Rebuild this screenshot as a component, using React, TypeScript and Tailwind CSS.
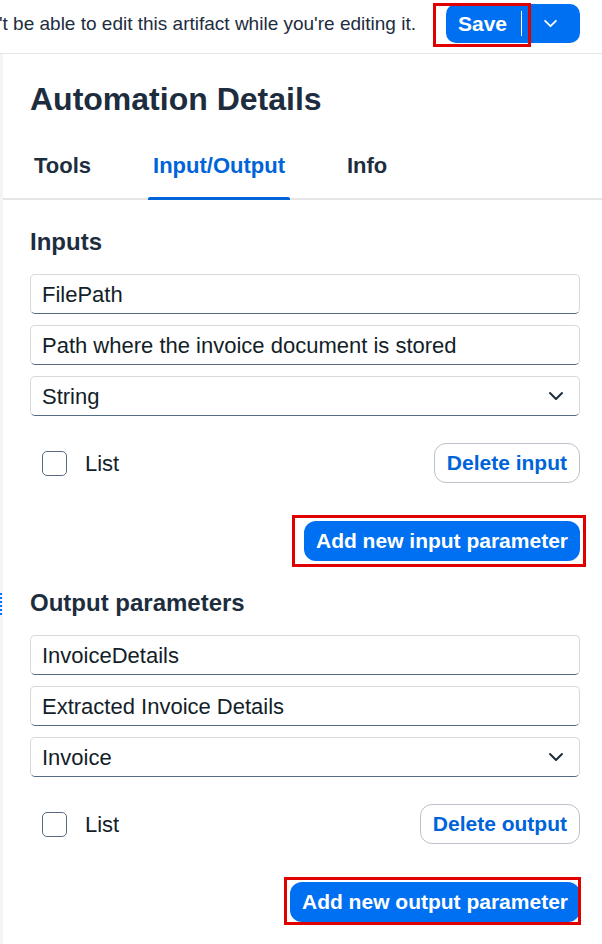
import React from 'react';

const font = { fontFamily: '"Liberation Sans", Arial, sans-serif' };

function Chevron({ className }: { className?: string }) {
  return (
    <svg viewBox="0 0 16 10" className={className} fill="none" stroke="currentColor" strokeWidth="2" strokeLinecap="round" strokeLinejoin="round">
      <path d="M2 2l6 6 6-6" />
    </svg>
  );
}

function Field({ value, select }: { value: string; select?: boolean }) {
  return (
    <div className="flex h-[40px] items-center justify-between rounded-[5px] border border-[#d5dadd] border-b-[#556b82] bg-white pl-[11px] pr-[15px] text-[22px] text-[#131e29]">
      <span>{value}</span>
      {select && <Chevron className="h-[10px] w-[16px] text-[#1d2d3e]" />}
    </div>
  );
}

function ParamBlock({
  title,
  fields,
  deleteLabel,
  addLabel,
  boxClass,
}: {
  title: string;
  fields: string[];
  deleteLabel: string;
  addLabel: string;
  boxClass: string;
}) {
  return (
    <div className="flex flex-col">
      <h2 className="h-[30px] text-[24px] font-bold leading-[30px] text-[#1d2d3e]">{title}</h2>
      <div className="mt-[17px] flex flex-col gap-[11px]">
        <Field value={fields[0]} />
        <Field value={fields[1]} />
        <Field value={fields[2]} select />
      </div>
      <div className="mt-[27px] flex h-[40px] items-center justify-between">
        <label className="flex items-center gap-[18px] pl-[12px]">
          <span className="h-[25px] w-[25px] rounded-[5px] border border-[#556b82] bg-white" />
          <span className="text-[22px] text-[#131e29]">List</span>
        </label>
        <button className="h-[40px] rounded-[12px] border border-[#bcc3ca] bg-white px-[12px] text-[21px] font-bold text-[#0064d9]">
          {deleteLabel}
        </button>
      </div>
      <div className="mt-[38px] flex justify-end">
        <div className="relative">
          <button className="h-[40px] rounded-[12px] bg-[#0070f2] px-[12px] text-[21px] font-bold text-white">
            {addLabel}
          </button>
          <div className={`pointer-events-none absolute border-[3px] border-[#e00000] ${boxClass}`} />
        </div>
      </div>
    </div>
  );
}

export default function App() {
  return (
    <div className="min-h-[944px] w-[602px] overflow-hidden bg-white" style={font}>
      {/* Top message bar */}
      <div className="flex h-[54px] items-start border-b border-[#e5e5e5] pr-[22px] pt-[4px]">
        <div className="flex min-w-0 flex-1 justify-end overflow-hidden pr-[30px]">
          <span className="whitespace-nowrap text-[19px] leading-[39px] text-[#1d2d3e]">
            Others won't be able to edit this artifact while you're editing it.
          </span>
        </div>
        <div className="relative">
          <div className="flex h-[39px] items-center rounded-[10px] bg-[#0070f2] text-white">
            <span className="pl-[12px] pr-[14px] text-[21px] font-bold">Save</span>
            <span className="h-[25px] w-px bg-white" />
            <span className="flex w-[58px] items-center justify-center pr-[2px]">
              <Chevron className="h-[9px] w-[15px]" />
            </span>
          </div>
          <div className="pointer-events-none absolute -left-[13px] -top-[1px] h-[44px] w-[98px] border-[3px] border-[#e00000]" />
        </div>
      </div>

      <div className="flex">
        {/* left strip */}
        <div className="relative w-[3px] shrink-0 bg-[#f2f4f5]">
          <svg className="absolute left-0 top-[539px]" width="3" height="22" viewBox="0 0 3 22">
            {[0, 4, 8, 12, 16, 20].map((y) => (
              <rect key={y} x="0" y={y} width="2" height="2" fill="#0070f2" />
            ))}
          </svg>
        </div>

        <div className="min-w-0 flex-1">
          {/* Header */}
          <h1 className="pl-[27px] pt-[26px] text-[32px] font-bold leading-[38px] text-[#1d2d3e]">
            Automation Details
          </h1>
          <div className="mt-[10px] flex gap-[52px] border-b-2 border-[#e5e5e5] pl-[26px]">
            {['Tools', 'Input/Output', 'Info'].map((t) => (
              <div
                key={t}
                className={`relative flex h-[70px] items-center px-[5px] pt-[4px] text-[22px] font-bold ${
                  t === 'Input/Output' ? 'text-[#0064d9]' : 'text-[#1d2d3e]'
                }`}
              >
                {t}
                {t === 'Input/Output' && (
                  <span className="absolute -bottom-[2px] left-0 right-0 h-[3px] rounded-t-[2px] bg-[#0064d9]" />
                )}
              </div>
            ))}
          </div>

          {/* Body */}
          <div className="flex flex-col gap-[27px] pb-[22px] pl-[27px] pr-[22px] pt-[27px]">
            <ParamBlock
              title="Inputs"
              fields={['FilePath', 'Path where the invoice document is stored', 'String']}
              deleteLabel="Delete input"
              addLabel="Add new input parameter"
              boxClass="-left-[12px] -right-[6px] -top-[6px] -bottom-[6px]"
            />
            <ParamBlock
              title="Output parameters"
              fields={['InvoiceDetails', 'Extracted Invoice Details', 'Invoice']}
              deleteLabel="Delete output"
              addLabel="Add new output parameter"
              boxClass="-left-[6px] -right-[1px] -top-[5px] -bottom-[3px]"
            />
          </div>
        </div>
      </div>
    </div>
  );
}
